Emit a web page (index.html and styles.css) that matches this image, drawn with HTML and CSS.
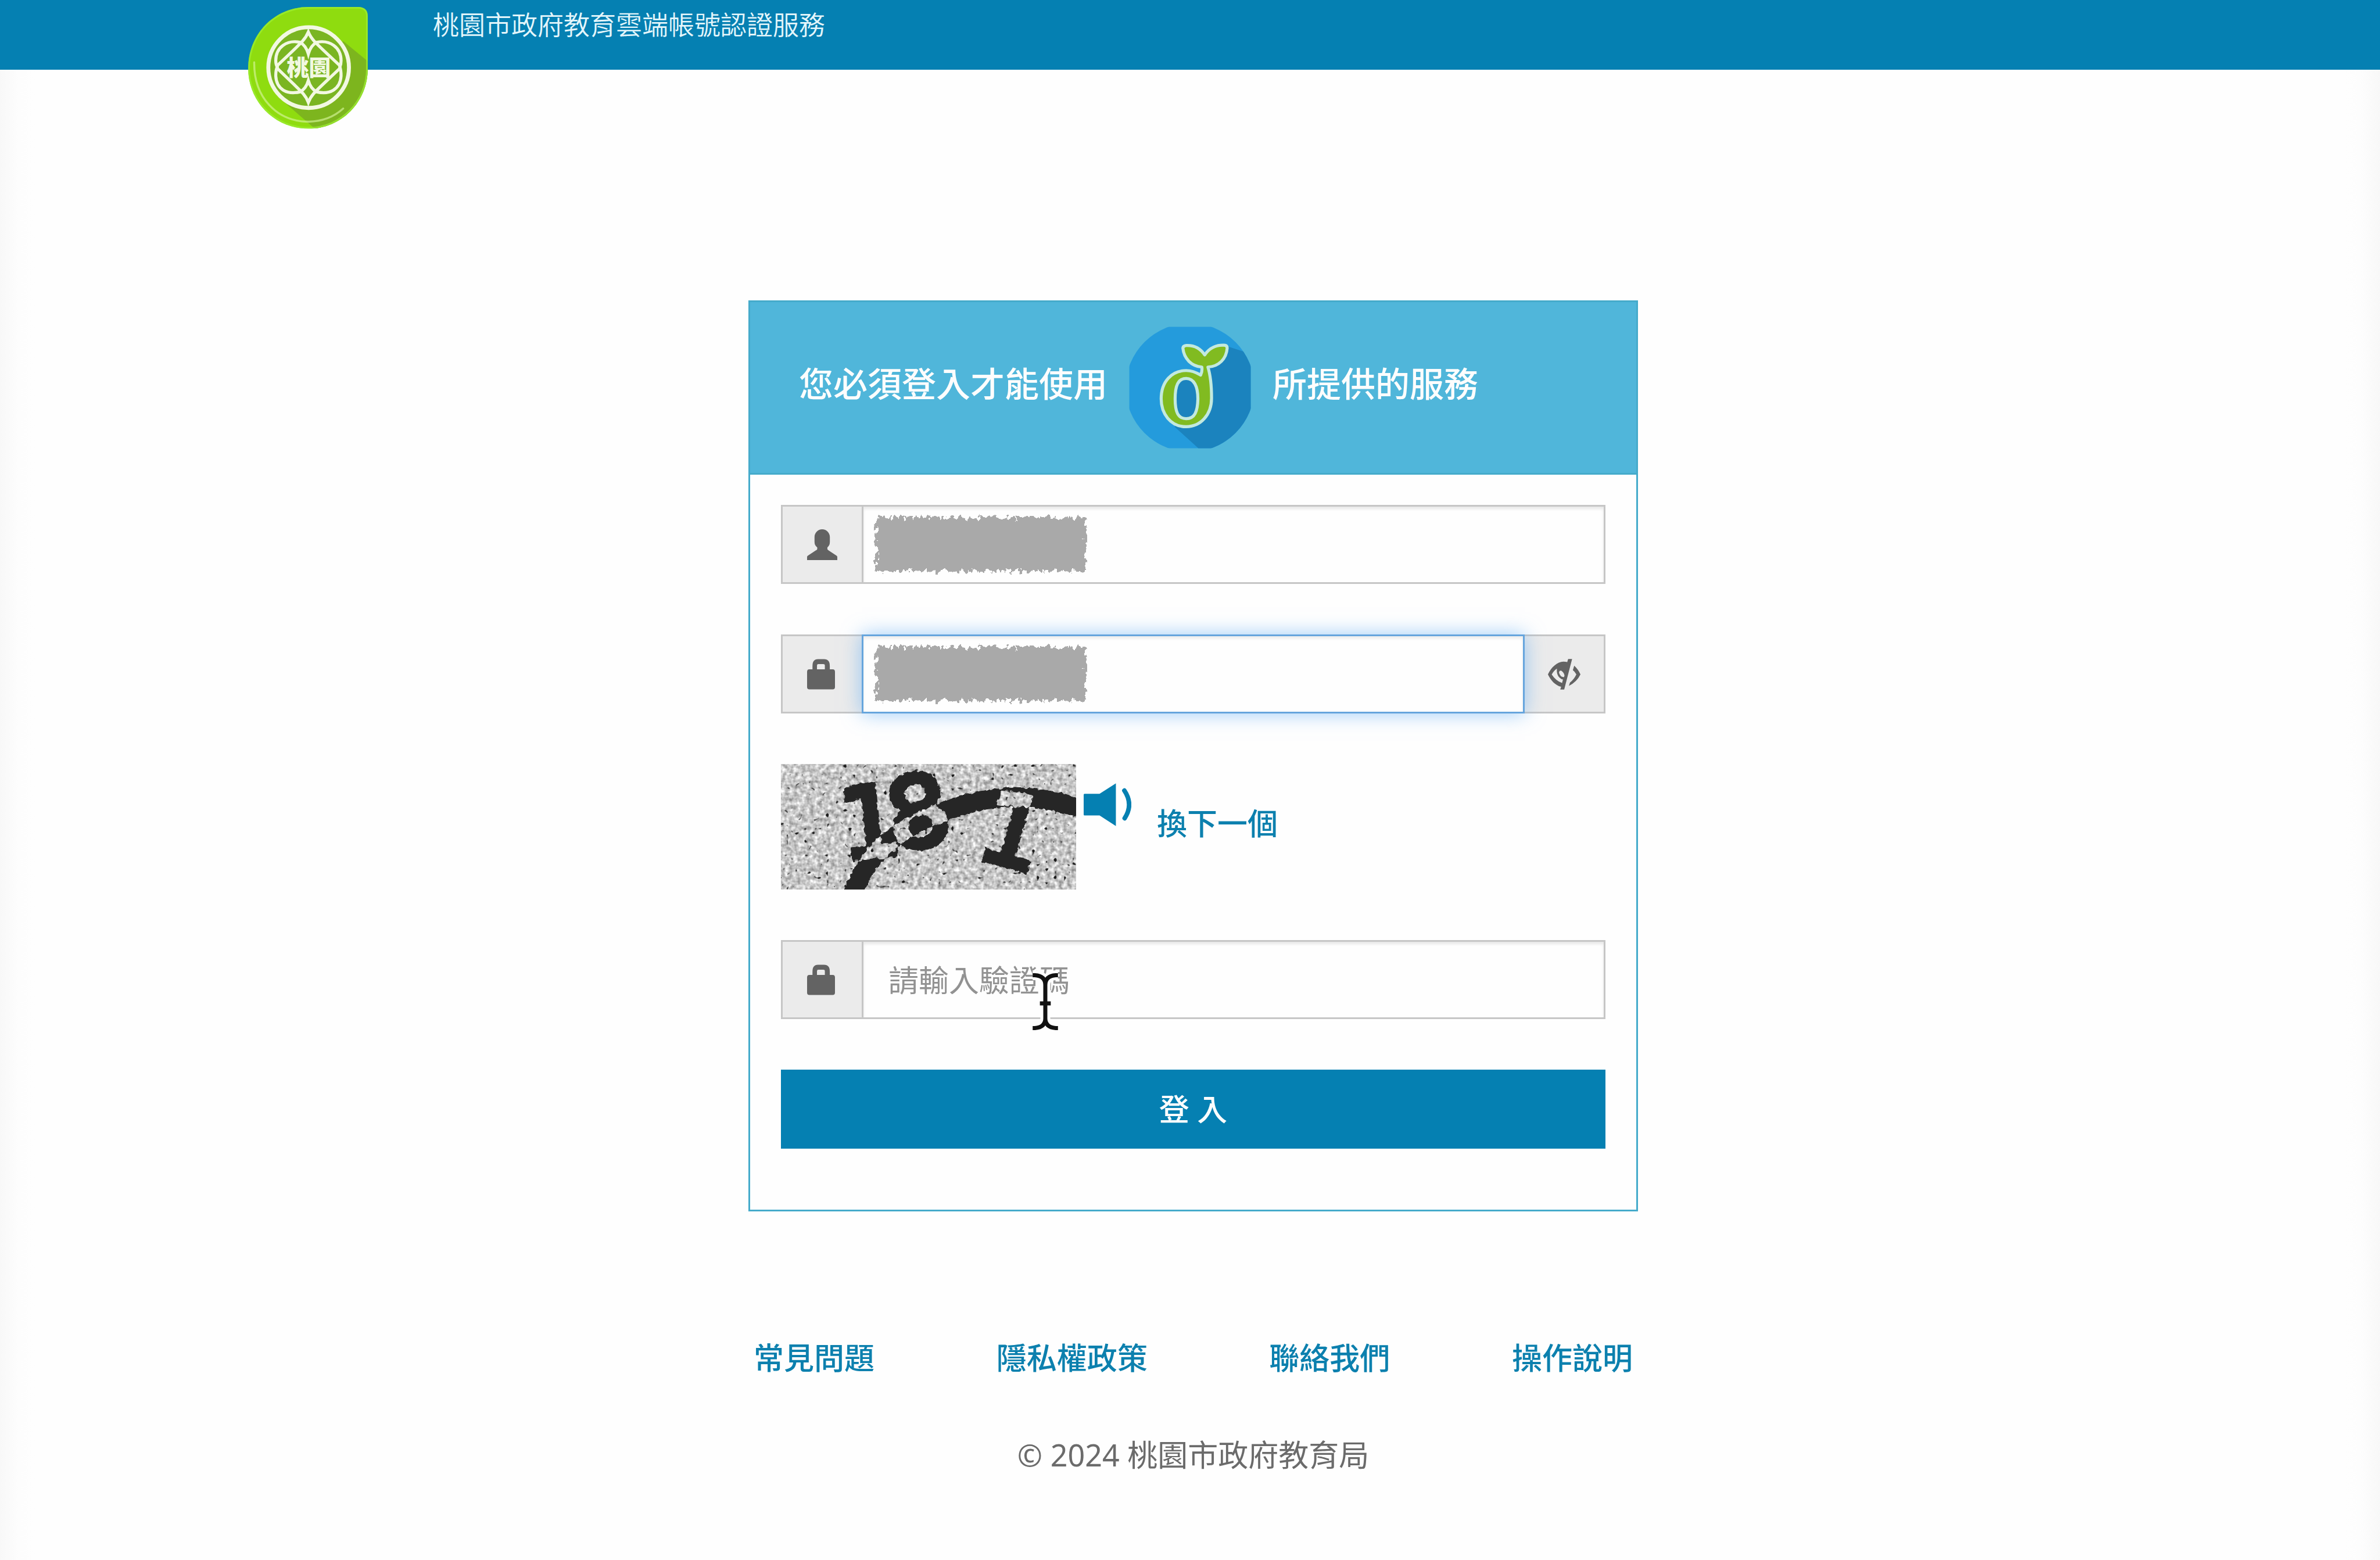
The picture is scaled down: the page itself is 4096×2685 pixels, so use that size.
FILE: index.html
```html
<!DOCTYPE html>
<html lang="zh-Hant">
<head>
<meta charset="utf-8">
<meta name="viewport" content="width=device-width, initial-scale=1">
<title>桃園市政府教育雲端帳號認證服務</title>
<link rel="stylesheet" href="styles.css">
</head>
<body>
<svg class="defs" width="0" height="0" aria-hidden="true">
  <defs>
    <symbol id="icon-lock" viewBox="0 0 62 67">
      <path fill-rule="evenodd" d="M12 22.5V15Q12 0 24 0H38Q50.500 0 50.500 15V22.500H57Q62 22.500 62 28V62Q62 67 57 67H5Q0 67 0 62V28Q0 22.500 5 22.500ZM22 22.500H39.500V14Q39.500 11 36 11H25Q22 11 22 14Z"/>
    </symbol>
    <filter id="rough" x="-5%" y="-10%" width="110%" height="120%">
      <feTurbulence type="fractalNoise" baseFrequency="0.14 0.09" numOctaves="3" seed="7" result="n"/>
      <feDisplacementMap in="SourceGraphic" in2="n" scale="22" xChannelSelector="R" yChannelSelector="G"/>
    </filter>
    <symbol id="redaction" viewBox="0 0 368 104">
      <rect x="5" y="6" width="361" height="92" fill="#a9a9a9" filter="url(#rough)"/>
    </symbol>
  </defs>
</svg>

<header class="topbar">
  <a class="brand" href="#" aria-label="桃園">
    <svg viewBox="140 45 795 805">
      <defs>
        <clipPath id="drop"><path d="M540 45H875Q932 50 932 105V450C932 670 760 848 540 848C320 848 143 670 143 450C143 220 320 45 540 45Z"/></clipPath>
      </defs>
      <g clip-path="url(#drop)">
        <rect x="140" y="45" width="800" height="810" fill="#8fdc0f"/>
        <path d="M770 270L940 410V850H585L390 680Z" fill="#7db51e"/>
        <path d="M540 45H875Q932 50 932 105V450C932 670 760 848 540 848C320 848 143 670 143 450C143 220 320 45 540 45Z" fill="none" stroke="#9bee33" stroke-width="22" opacity=".75"/>
      </g>
      <path d="M183 410C180 640 330 800 540 802C640 800 710 770 770 715" fill="none" stroke="#d5f59a" stroke-width="13" stroke-linecap="round" opacity=".65"/>
      <circle cx="542" cy="445" r="266" fill="#7ab522" stroke="#f2f8e2" stroke-width="26"/>
      <g fill="none" stroke="#f2f8e2" stroke-width="20" stroke-linejoin="miter">
        <path d="M540 210C520 260 500 275 335 432V450C500 610 520 620 540 675C560 620 580 610 748 450V432C580 275 560 260 540 210Z"/>
        <path d="M540 355Q525 300 485 278C400 260 325 310 325 400Q325 425 335 441Q325 460 325 500C330 590 400 625 485 605Q525 585 540 530Q555 585 595 605C680 625 750 590 756 500Q756 460 748 441Q756 425 756 400C756 310 680 260 595 278Q555 300 540 355Z"/>
      </g>
      <text class="brand-text" x="543" y="497" text-anchor="middle">桃園</text>
    </svg>
  </a>
  <p class="topbar-title">桃園市政府教育雲端帳號認證服務</p>
</header>

<main class="page">
  <section class="panel">
    <h1 class="panel-heading">
      <span class="heading-text">您必須登入才能使用</span>
      <svg class="service-logo" viewBox="88 88 804 804" role="img" aria-label="服務標誌">
        <defs><clipPath id="disc"><circle cx="490" cy="490" r="424"/></clipPath></defs>
        <g clip-path="url(#disc)">
          <rect x="90" y="90" width="800" height="800" rx="8" fill="#249bdc"/>
          <path d="M735 218L890 268V890H545L390 750L460 500L600 350Z" fill="#1b83be"/>
        </g>
        <path fill="#81bb21" stroke="#c3e9de" stroke-width="20" stroke-linejoin="round" fill-rule="evenodd" d="M465 378C500 378 530 390 560 408Q572 385 568 355C500 350 450 300 443 230Q445 215 465 213C520 210 560 235 587 275C620 225 670 208 715 211Q735 212 735 230C730 300 680 352 608 355C625 410 632 470 632 560C632 670 560 748 465 748C360 748 300 660 300 565C300 450 370 378 465 378Z"/>
        <path fill="#1b83be" stroke="#c3e9de" stroke-width="20" d="M465 430C410 430 392 480 392 565C392 650 410 695 465 695C520 695 540 650 542 565C542 480 515 430 465 430Z"/>
      </svg>
      <span class="heading-text">所提供的服務</span>
    </h1>

    <form class="panel-body">
      <div class="field">
        <label class="addon" for="account" aria-label="帳號">
          <svg class="icon" viewBox="0 0 67 68"><path d="M33.500 0C43 0 50.500 8 50.500 17V28Q50.500 36 45 40V44Q46 46 48 47L65 58Q67 59 67 61V68H0V61Q0 59 2 58L19 47Q22 46 22.500 44V40Q16.500 36 16.500 28V17C16.500 8 24 0 33.500 0Z"/></svg>
        </label>
        <div class="control">
          <input id="account" class="input" type="text" autocomplete="off">
          <svg class="redaction" aria-hidden="true"><use href="#redaction"/></svg>
        </div>
      </div>

      <div class="field">
        <label class="addon" for="password" aria-label="密碼">
          <svg class="icon icon-lock"><use href="#icon-lock"/></svg>
        </label>
        <div class="control">
          <input id="password" class="input input-active" type="password" autocomplete="off">
          <svg class="redaction" aria-hidden="true"><use href="#redaction"/></svg>
        </div>
        <button class="addon addon-end" type="button" aria-label="顯示密碼">
          <svg class="icon icon-eye" viewBox="393 272 214 201"><path fill-rule="evenodd" d="M393 373C415 325 455 290 495 289Q510 289 520 292L526 272H552L500 473H474L480 455C440 445 410 410 393 373ZM418 374Q430 350 452 335Q448 375 470 395Q480 405 492 407L486 430Q445 415 418 374ZM466 362Q468 345 482 350Q498 362 502 380L499 392Q474 392 466 362ZM566 316Q592 340 607 373Q585 420 531 449L538 427Q565 405 580 373Q570 355 557 346Z"/></svg>
        </button>
      </div>

      <div class="captcha">
        <svg class="captcha-image" viewBox="0 0 508 216" role="img" aria-label="驗證碼">
          <defs>
            <filter id="grain" x="0" y="0" width="100%" height="100%" color-interpolation-filters="sRGB">
              <feTurbulence type="fractalNoise" baseFrequency="0.14" numOctaves="2" seed="3"/>
              <feColorMatrix values="0.7 0 0 0 0.43  0.7 0 0 0 0.43  0.7 0 0 0 0.43  0 0 0 0 1"/>
            </filter>
            <filter id="specks" x="0" y="0" width="100%" height="100%" color-interpolation-filters="sRGB">
              <feTurbulence type="fractalNoise" baseFrequency="0.13" numOctaves="1" seed="21"/>
              <feColorMatrix values="0 0 0 0 0.1  0 0 0 0 0.1  0 0 0 0 0.1  0 12 0 0 -8.1"/>
            </filter>
            <filter id="ink" x="0" y="0" width="100%" height="100%" color-interpolation-filters="sRGB">
              <feColorMatrix in="SourceGraphic" values="0 0 0 0 0.15  0 0 0 0 0.15  0 0 0 0 0.15  1 0 0 0 0" result="i"/>
              <feTurbulence type="fractalNoise" baseFrequency="0.15" numOctaves="1" seed="5" result="t"/>
              <feDisplacementMap in="i" in2="t" scale="9" xChannelSelector="R" yChannelSelector="G"/>
            </filter>
          </defs>
          <rect width="508" height="216" filter="url(#grain)"/>
          <rect width="508" height="216" filter="url(#specks)"/>
          <g filter="url(#ink)">
            <rect width="508" height="216" fill="#000"/>
            <g class="captcha-text">
              <text transform="translate(106 164) rotate(-6)">1</text>
              <text transform="translate(194 150) rotate(-10)">8</text>
              <text transform="translate(332 158) rotate(16)">1</text>
            </g>
            <path class="captcha-curve" d="M122 226C145 170 165 150 190 130C230 98 280 80 330 66C400 50 450 56 516 76"/>
          </g>
        </svg>
        <a class="speaker" href="#" aria-label="播放語音驗證碼">
          <svg viewBox="0 0 315 283"><path d="M6 69H105L213 0V283L105 213H6Q0 213 0 207V75Q0 69 6 69Z"/><path class="wave" d="M269 48Q331 140 271 231"/></svg>
        </a>
        <a class="link next" href="#">換下一個</a>
      </div>

      <div class="field">
        <label class="addon" for="captcha" aria-label="驗證碼">
          <svg class="icon icon-lock"><use href="#icon-lock"/></svg>
        </label>
        <div class="control">
          <input id="captcha" class="input" type="text" placeholder="請輸入驗證碼" autocomplete="off">
          <svg class="cursor" viewBox="0 0 56 126" aria-hidden="true">
            <defs><path id="beam" d="M0 4.500H5Q28 6 28 26V100Q28 120 5 121.500H0M56 4.500H51Q28 6 28 26M28 100Q28 120 51 121.500H56M16 67H40"/></defs>
            <use href="#beam" class="beam-halo"/>
            <use href="#beam" class="beam-ink"/>
          </svg>
        </div>
      </div>

      <button class="submit" type="submit">登 入</button>
    </form>
  </section>

  <footer class="footer">
    <nav class="footer-links">
      <a class="link" href="#">常見問題</a>
      <a class="link" href="#">隱私權政策</a>
      <a class="link" href="#">聯絡我們</a>
      <a class="link" href="#">操作說明</a>
    </nav>
    <p class="copyright">© 2024 桃園市政府教育局</p>
  </footer>
</main>
</body>
</html>
```
FILE: styles.css
```css
* {
  box-sizing: border-box;
}

body {
  margin: 0;
  background: linear-gradient(90deg, #f8f8f8, #fdfdfd 32px, #fefefe 60px, #fefefe calc(100% - 60px), #fdfdfd calc(100% - 32px), #f8f8f8);
  color: #6b6b6b;
  font-family: "Noto Sans", "Noto Sans CJK TC", sans-serif;
  font-size: 52px;
  line-height: 74px;
}

p, h1 {
  margin: 0;
}

svg {
  display: block;
}

.defs {
  position: absolute;
}

/* Top bar */
.topbar {
  display: flex;
  align-items: flex-start;
  gap: 111px;
  height: 120px;
  padding: 12px 10.4% 0;
  background: #0580b2;
}

.brand svg {
  width: 208px;
  height: 210px;
}

.brand-text {
  fill: #f2f8e2;
  font-family: "Noto Sans CJK TC", sans-serif;
  font-size: 145px;
  font-weight: 900;
}

.topbar-title {
  color: #e4f6fb;
  font-size: 45px;
  font-weight: 350;
  line-height: 62px;
}

/* Login panel */
.page {
  display: flex;
  flex-direction: column;
  align-items: center;
  padding: 397px 0 140px 11px;
}

.panel {
  width: 100%;
  max-width: 1531px;
  border: 3px solid #45abcb;
  background: #fefefe;
}

.panel-heading {
  display: flex;
  align-items: center;
  gap: 37px;
  padding: 42px 84px;
  border-bottom: 3px solid #45abcb;
  background: #50b6da;
  color: #fdfdfd;
  font-size: 59px;
  font-weight: 500;
  line-height: 84px;
}

.heading-text {
  padding-bottom: 14px;
}

.service-logo {
  flex: none;
  width: 210px;
  height: 210px;
}

.panel-body {
  display: flex;
  flex-direction: column;
  gap: 87px;
  padding: 52px 53px 105px;
}

.field {
  display: flex;
  height: 136px;
}

.addon {
  display: flex;
  flex: none;
  align-items: center;
  width: 139px;
  padding: 0 0 0 42px;
  border: 3px solid #c6c6c6;
  border-right: 0;
  background: #ebebeb;
}

.addon-end {
  padding-left: 40px;
  border-right: 3px solid #c6c6c6;
  border-left: 0;
}

.icon {
  width: 52px;
  height: 53px;
  fill: #636363;
}

.icon-lock {
  width: 48px;
}

.icon-eye {
  width: 56px;
}

.control {
  position: relative;
  flex: 1;
  min-width: 0;
}

.input {
  width: 100%;
  height: 100%;
  padding: 0 43px;
  border: 3px solid #c6c6c6;
  border-radius: 0;
  outline: 0;
  background: #fefefe;
  box-shadow: inset 0 4px 5px rgba(0, 0, 0, 0.09);
  color: #555;
  font: inherit;
}

.input::placeholder {
  color: #929292;
  opacity: 1;
}

.input-active {
  border-color: #66a5dd;
  box-shadow: inset 0 4px 5px rgba(0, 0, 0, 0.07), 0 0 32px rgba(92, 170, 245, 0.6);
}

.redaction {
  position: absolute;
  top: 16px;
  left: 20px;
  width: 368px;
  height: 104px;
}

.cursor {
  position: absolute;
  top: 57px;
  left: 294px;
  width: 44px;
  height: 98px;
  overflow: visible;
  fill: none;
}

.beam-halo {
  stroke: #fefefe;
  stroke-width: 22;
}

.beam-ink {
  stroke: #111;
  stroke-width: 9;
}

/* Captcha row */
.captcha {
  display: flex;
  align-items: flex-start;
  height: 216px;
}

.captcha-image {
  flex: none;
  width: 508px;
  height: 216px;
}

.captcha-text {
  fill: #fff;
  stroke: #fff;
  stroke-width: 10;
  font-family: "DejaVu Sans", sans-serif;
  font-size: 168px;
}

.captcha-curve {
  fill: none;
  stroke: #fff;
  stroke-width: 33;
  mix-blend-mode: difference;
}

.speaker {
  padding: 33px 0 0 13px;
}

.speaker svg {
  width: 82px;
  height: 74px;
  fill: #0580b2;
}

.speaker .wave {
  fill: none;
  stroke: #0580b2;
  stroke-width: 30;
  stroke-linecap: round;
}

.link {
  color: #0c80ae;
  font-weight: 500;
  text-decoration: none;
}

.next {
  padding: 65px 0 0 44px;
}

.submit {
  height: 136px;
  padding: 0;
  border: 0;
  background: #0580b2;
  color: #fdfdfd;
  font: inherit;
  font-weight: 500;
}

/* Footer */
.footer {
  display: flex;
  flex-direction: column;
  gap: 93px;
  width: 100%;
  max-width: 1513px;
  padding-top: 215px;
}

.footer-links {
  display: flex;
  justify-content: space-between;
}

.copyright {
  text-align: center;
}
```
